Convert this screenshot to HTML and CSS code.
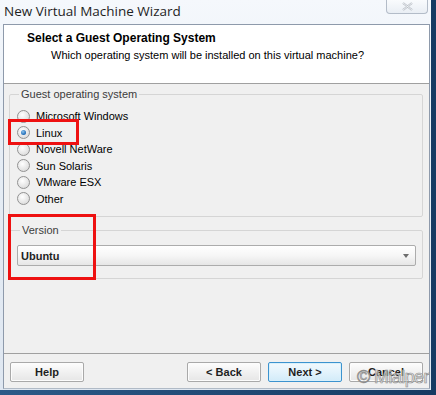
FILE: index.html
```html
<!DOCTYPE html>
<html lang="en">
  <head>
    <meta charset="UTF-8" />
    <title>New Virtual Machine Wizard</title>
    <link rel="stylesheet" href="styles.css">
  </head>
  <body>
    <div class="window">
      <!-- Barra de titulo -->
      <div class="titlebar">
        <span class="title">New Virtual Machine Wizard</span>
        <div class="close-btn">
          <svg width="11" height="9" viewBox="0 0 11 9">
            <path d="M1 1 L10 8 M10 1 L1 8" stroke="#b9bec6" stroke-width="2.2" fill="none" />
            <path d="M1 1 L10 8 M10 1 L1 8" stroke="#f4f6f8" stroke-width="0.8" fill="none" />
          </svg>
        </div>
      </div>

      <div class="client">
        <div class="header">
          <h1>Select a Guest Operating System</h1>
          <p>Which operating system will be installed on this virtual machine?</p>
        </div>

        <div class="main">
          <fieldset class="group">
            <legend>Guest operating system</legend>
            <div class="radio-row"><span class="radio"></span>Microsoft Windows</div>
            <div class="radio-row"><span class="radio checked"></span>Linux</div>
            <div class="radio-row"><span class="radio"></span>Novell NetWare</div>
            <div class="radio-row"><span class="radio"></span>Sun Solaris</div>
            <div class="radio-row"><span class="radio"></span>VMware ESX</div>
            <div class="radio-row"><span class="radio"></span>Other</div>
          </fieldset>

          <fieldset class="group version">
            <legend>Version</legend>
            <div class="select">
              <span>Ubuntu</span>
              <span class="arrow"></span>
            </div>
          </fieldset>
        </div>

        <div class="footer">
          <button class="btn">Help</button>
          <div class="spacer"></div>
          <button class="btn">&lt; Back</button>
          <button class="btn default">Next &gt;</button>
          <button class="btn">Cancel</button>
        </div>
      </div>

      <!-- Marcas rojas y marca de agua -->
      <div class="mark mark-linux"></div>
      <div class="mark mark-version"></div>
      <div class="watermark">© Mialper</div>
    </div>
  </body>
</html>
```

FILE: styles.css
```css
body {
  margin: 0;
  background: linear-gradient(to right, #2b5a88, #163a62);
  font-family: "Liberation Sans", Arial, sans-serif;
  font-size: 11px;
  color: #000;
  height: 395px;
  overflow: hidden;
}

.window {
  position: relative;
  width: 431px;
  height: 390px;
  box-sizing: border-box;
  padding: 0 1px 0 3px;
  background: linear-gradient(to bottom, #f5f8fc, #e6edf5 40%, #dfe7f1);
  display: flex;
  flex-direction: column;
}

.titlebar {
  height: 24px;
  display: flex;
  align-items: flex-start;
  justify-content: space-between;
}

.title {
  font-family: "Open Sans", sans-serif;
  font-size: 13.5px;
  color: #1f1f1f;
  margin-top: 2px;
  margin-left: 1px;
}

.close-btn {
  width: 40px;
  height: 13px;
  margin-right: 2px;
  border: 1px solid #b3bcc8;
  border-top: none;
  border-radius: 0 0 4px 4px;
  background: linear-gradient(to bottom, #f9fbfd, #e9eef4);
  display: flex;
  align-items: center;
  justify-content: center;
}

.client {
  flex: 1;
  border: 1px solid #8e9aab;
  border-bottom-color: #b0bac6;
  margin-bottom: 1px;
  background: #f0f0f0;
  display: flex;
  flex-direction: column;
}

.header {
  height: 52px;
  background: #fff;
  border-bottom: 1px solid #a0a0a0;
  padding: 6px 0 0 23px;
}

.header h1 {
  margin: 0;
  font-size: 12px;
  line-height: 15px;
  font-weight: bold;
}

.header p {
  margin: 2px 0 0 24px;
  line-height: 15px;
}

.main {
  flex: 1;
  padding: 4px 6px 0 5px;
}

.group {
  margin: 0;
  padding: 7px 0 9px 6px;
  border: 1px solid #d5d5d5;
  border-radius: 2px;
}

.group legend {
  padding: 0 2px;
  margin-left: 3px;
  color: #3c3c3c;
  line-height: 13px;
}

.radio-row {
  height: 16.5px;
  display: flex;
  align-items: center;
}

.radio {
  width: 11px;
  height: 11px;
  border: 1px solid #929292;
  border-radius: 50%;
  background: radial-gradient(circle at 40% 35%, #ffffff, #e0e0e0 70%, #cfcfcf);
  margin: 0 6px 0 1px;
  display: flex;
  align-items: center;
  justify-content: center;
}

.radio.checked::after {
  content: "";
  width: 5px;
  height: 5px;
  border-radius: 50%;
  background: radial-gradient(circle at 40% 35%, #8cc4ef, #1a67b3 70%, #11508f);
}

.version {
  margin-top: 7px;
  padding: 8px 6px 12px 7px;
}

.select {
  height: 19px;
  border: 1px solid #acacac;
  border-radius: 2px;
  background: linear-gradient(to bottom, #ffffff, #f6f6f6 50%, #e6e6e6);
  display: flex;
  align-items: center;
  justify-content: space-between;
  padding: 0 6px 0 3px;
  font-weight: bold;
  color: #1e1e1e;
}

.arrow {
  width: 0;
  height: 0;
  border-left: 3.5px solid transparent;
  border-right: 3.5px solid transparent;
  border-top: 4px solid #6d6d6d;
}

.footer {
  border-top: 1px solid #a0a0a0;
  padding: 8px 6px 6px 6px;
  display: flex;
  gap: 7px;
}

.spacer {
  flex: 1;
}

.btn {
  width: 74px;
  height: 20px;
  padding: 0;
  font-family: "Liberation Sans", Arial, sans-serif;
  font-size: 11px;
  font-weight: bold;
  color: #1e1e1e;
  border: 1px solid #a9a9a9;
  border-radius: 2px;
  background: linear-gradient(to bottom, #fdfdfd, #f1f1f1 50%, #e6e6e6);
  box-shadow: inset 0 0 0 1px #fcfcfc;
}

.btn.default {
  border-color: #3c93cf;
  background: linear-gradient(to bottom, #f2f9fd, #e3f3fc 50%, #d2ebf9);
  box-shadow: inset 0 0 0 1px #d8f0fb;
}

.mark {
  position: absolute;
  border: 3px solid #ee1111;
}

.mark-linux {
  left: 8px;
  top: 119px;
  width: 65px;
  height: 20px;
}

.mark-version {
  left: 8px;
  top: 214px;
  width: 82px;
  height: 60px;
}

.watermark {
  position: absolute;
  left: 357px;
  top: 367px;
  font-family: "Liberation Sans", Arial, sans-serif;
  font-size: 18px;
  letter-spacing: -0.6px;
  color: rgba(255, 255, 255, 0.55);
  -webkit-text-stroke: 0.7px #8d8d8d;
  white-space: nowrap;
}
```
